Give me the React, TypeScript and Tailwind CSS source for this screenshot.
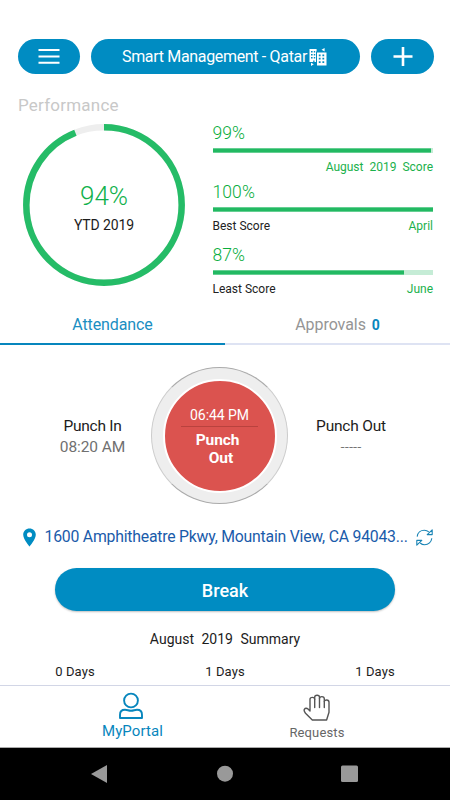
import React from "react";

function MenuIcon() {
  return (
    <svg width="22" height="16" viewBox="0 0 22 16" stroke="white" strokeWidth="2">
      <path d="M0.5 2H21.5M0.5 8.4H21.5M0.5 14.8H21.5" />
    </svg>
  );
}

function PlusIcon() {
  return (
    <svg width="20" height="20" viewBox="0 0 20 20" stroke="white" strokeWidth="2.6">
      <path d="M0.5 10.5H19.5M10 1V20" />
    </svg>
  );
}

function BuildingIcon() {
  return (
    <svg className="relative top-px" width="18" height="18" viewBox="0 0 18 18" fill="white">
      <path
        fillRule="evenodd"
        d="M.5 1H7.6V3.4H7V14H5.5V12.5H4.2V14H.5ZM2 3V4.5H3.6V3ZM4.8 3V4.5H6.2V3ZM2 6V7.5H3.6V6ZM4.8 6V7.5H6.2V6ZM2 9V10.5H3.6V9ZM4.8 9V10.5H6.2V9Z"
      />
      <path
        fillRule="evenodd"
        d="M8 4.5H17.5V17.5H8ZM9.8 6.5V8.3H11.6V6.5ZM13.4 6.5V8.3H15.2V6.5ZM9.8 9.8V11.6H11.6V9.8ZM13.4 9.8V11.6H15.2V9.8ZM9.8 13.3V15.1H11.6V13.3ZM13.4 13.3V15.1H15.2V13.3Z"
      />
      <path d="M12.5 1.8L15.6 0V3.5ZM2 14.8L4.8 16.3L2 18Z" />
    </svg>
  );
}

function Score({
  value,
  fill,
  left,
  right,
  spaced = false,
  className,
}: {
  value: string;
  fill: number;
  left?: string;
  right: string;
  spaced?: boolean;
  className: string;
}) {
  return (
    <div className={className}>
      <div className="h-[26px] text-[17.5px] leading-[22px] font-light tracking-[0.1px] text-[#08ad3c]">{value}</div>
      <div className="h-[5px] bg-[#c5ecd6]">
        <div className="h-full border-y border-[#65cf92] bg-[#22b962]" style={{ width: `${fill}%` }} />
      </div>
      <div className="mt-[6px] flex justify-between text-[12px] leading-[16px]">
        <span className="text-[#222]">{left}</span>
        <span className={spaced ? "text-[#1bb14c] [word-spacing:3px]" : "text-[#1bb14c]"}>{right}</span>
      </div>
    </div>
  );
}

export default function App() {
  return (
    <div className="flex h-[800px] w-[450px] flex-col overflow-hidden bg-white font-['Roboto',sans-serif] font-normal whitespace-nowrap text-[#1c1c1c]">
      <header className="mt-[39px] ml-[18px] flex h-[35px] gap-[11px]">
        <button className="flex w-[62px] items-center justify-center rounded-full bg-[#008cc2]">
          <MenuIcon />
        </button>
        <div className="flex w-[269px] items-center rounded-full bg-[#008cc2] pl-[31px] text-[16px] text-white">
          <span className="w-[187px] pt-[2px] -tracking-[0.33px]">Smart Management - Qatar</span>
          <BuildingIcon />
        </div>
        <button className="flex w-[63px] items-center justify-center rounded-full bg-[#008cc2]">
          <PlusIcon />
        </button>
      </header>

      <h2 className="mt-[20px] ml-[18px] h-[22px] text-[17px] leading-[22px] font-normal tracking-[0.22px] text-[#c8c8c8]">
        Performance
      </h2>

      <section className="flex h-[199px]">
        <div className="mt-[8px] ml-[23px] grid size-[162px] place-items-center">
          <svg className="col-start-1 row-start-1" width="162" height="162" viewBox="0 0 162 162" fill="none">
            <circle cx="81" cy="81" r="77.7" stroke="#eee" strokeWidth="6.5" />
            <circle
              cx="81"
              cy="81"
              r="77.7"
              stroke="#25bc67"
              strokeWidth="6.5"
              pathLength="100"
              strokeDasharray="94 6"
              transform="rotate(-90 81 81)"
            />
          </svg>
          <div className="col-start-1 row-start-1 flex flex-col items-center pt-[4px]">
            <span className="h-[30px] text-[26px] leading-[32px] font-light -tracking-[0.1px] text-[#10b14b]">94%</span>
            <span className="mt-[6px] text-[14px] leading-[18px] -tracking-[0.1px]">YTD 2019</span>
          </div>
        </div>
        <div className="ml-[27.5px] w-[220.5px] pt-[6px]">
          <Score className="h-[59px]" value="99%" fill={99} right="August 2019 Score" spaced />
          <Score className="h-[63px]" value="100%" fill={100} left="Best Score" right="April" />
          <Score className="h-[60px]" value="87%" fill={87} left="Least Score" right="June" />
        </div>
      </section>

      <nav className="flex h-[31px] text-[16px] leading-[21px]">
        <div className="w-[225px] border-b-2 border-[#0786bd] text-center -tracking-[0.1px] text-[#1a8ec2]">Attendance</div>
        <div className="w-[225px] border-b-2 border-[#dee3f3] text-center -tracking-[0.05px] text-[#959595]">
          Approvals <b className="ml-[2px] text-[14px] font-bold text-[#0786bd]">0</b>
        </div>
      </nav>

      <section className="mt-[22px] flex h-[137px] items-center">
        <div className="w-[151px] pt-[2px] pl-[34px] text-center text-[15.5px] leading-[21px]">
          <div className="-tracking-[0.25px]">Punch In</div>
          <div className="-tracking-[0.1px] text-[#707070]">08:20 AM</div>
        </div>
        <div className="flex size-[137px] items-center justify-center rounded-full border border-[#ccc] border-t-[#aaa] border-b-[#aaa] bg-[#eee]">
          <div className="flex size-[114px] flex-col items-center rounded-full border-2 border-white bg-[#db534f] pt-[24px] text-white">
            <span className="text-[14px] leading-[20px] -tracking-[0.05px]">06:44 PM</span>
            <span className="mt-[1px] h-px w-[77px] bg-[#b9423e]" />
            <b className="mt-[4px] mr-[4px] text-[15.5px] leading-[18px] -tracking-[0.1px]">Punch</b>
            <b className="ml-[3px] text-[15.5px] leading-[18px]">Out</b>
          </div>
        </div>
        <div className="w-[126px] pt-[2px] text-center text-[15.5px] leading-[21px]">
          <div className="-tracking-[0.2px]">Punch Out</div>
          <div className="text-[14.5px] font-light text-[#555]">-----</div>
        </div>
      </section>

      <div className="mt-[21px] ml-[23px] flex h-[24px] items-center">
        <svg width="13" height="19" viewBox="0 0 13 19">
          <path fill="#008cc2" fillRule="evenodd" d="M6.5 .5C3 .5.2 3.2.2 6.7.2 11.3 6.5 18.5 6.5 18.5S12.8 11.3 12.8 6.7C12.8 3.2 10 .5 6.5 .5ZM6.5 4.3A2.5 2.5 0 1 1 6.5 9.3A2.5 2.5 0 0 1 6.5 4.3Z" />
        </svg>
        <span className="ml-[8.5px] w-[371px] text-[15.8px] leading-[24px] -tracking-[0.22px] text-[#1a5baa]">
          1600 Amphitheatre Pkwy, Mountain View, CA 94043...
        </span>
        <svg width="17" height="17" viewBox="0 0 17 17" fill="none" stroke="#1984b5" strokeWidth="1.1" strokeLinejoin="round">
          <path d="M1.2 7.6C1.6 3.8 4.6 1.2 8.3 1.2C10 1.2 11.6 1.8 12.8 2.9" />
          <path d="M15.8 9.2C15.4 13 12.4 15.7 8.7 15.7C7 15.7 5.4 15.1 4.2 14" />
          <path d="M16.2 .8V5.6H11.2ZM.8 16.2V11.4H5.8Z" />
        </svg>
      </div>

      <button className="mt-[19px] ml-[55px] h-[43px] w-[340px] rounded-full bg-[#008cc2] text-[18px] leading-[45px] font-medium text-white shadow-[0_1px_2px_rgba(0,0,0,0.25)]">
        Break
      </button>

      <div className="mt-[18px] text-center text-[14px] leading-[20px] [word-spacing:4px]">August 2019 Summary</div>
      <div className="mt-[13px] grid h-[23px] grid-cols-3 text-center text-[13px] leading-[19px] tracking-[0.1px]">
        <span>0 Days</span>
        <span>1 Days</span>
        <span>1 Days</span>
      </div>

      <footer className="flex h-[63px] border-t border-b border-t-[#d2d6e6] border-b-[#aaa]">
        <div className="flex w-[225px] flex-col items-center pl-[40px] text-[#0786bd]">
          <svg className="mt-[6px] mr-[3px]" width="24" height="28" viewBox="0 0 24 28" fill="none" stroke="currentColor" strokeWidth="1.9">
            <circle cx="12" cy="8.5" r="6.9" />
            <path d="M1 26V22.8C1 19.7 3 17.8 6 17.8C8.4 17.8 9.4 18.8 12 18.8S15.6 17.8 18 17.8C21 17.8 23 19.7 23 22.8V26Z" strokeLinejoin="round" />
          </svg>
          <span className="mt-[2px] text-[15px] leading-[19px] tracking-[0.1px]">MyPortal</span>
        </div>
        <div className="flex w-[225px] flex-col items-center pr-[41px] text-[#666]">
          <svg className="mt-[8px]" width="28" height="28" viewBox="0 0 28 28" fill="none" stroke="#555" strokeWidth="1.4" strokeLinejoin="round" strokeLinecap="round">
            <path d="M9.3 26L2.5 19.2C1.3 17.8 .7 16.3 1.5 15.1C2.2 14 3.8 13.9 5 15.1L7 17.1V5.2C7 2.8 11.7 2.8 11.7 5.2V3.2C11.7 .6 16.5 .6 16.5 3.2V4.4C16.5 2 21.3 2 21.3 4.8V7.6C21.3 5.3 26 5.3 26 8.2V18.3L23.6 26Z" />
            <path d="M11.7 5.2V13.5M16.5 4.4V13.5M21.3 7.6V13.5" />
          </svg>
          <span className="mt-[2px] text-[13px] leading-[18px] tracking-[0.15px]">Requests</span>
        </div>
      </footer>

      <div className="flex h-[52px] items-center bg-black pl-[91px]">
        <svg width="267" height="18" viewBox="0 0 267 18" fill="#999">
          <path d="M0 9L16 0V18Z" />
          <circle cx="134" cy="8.7" r="8" />
          <rect x="250" y=".5" width="17" height="16.5" rx="1.5" />
        </svg>
      </div>
    </div>
  );
}
